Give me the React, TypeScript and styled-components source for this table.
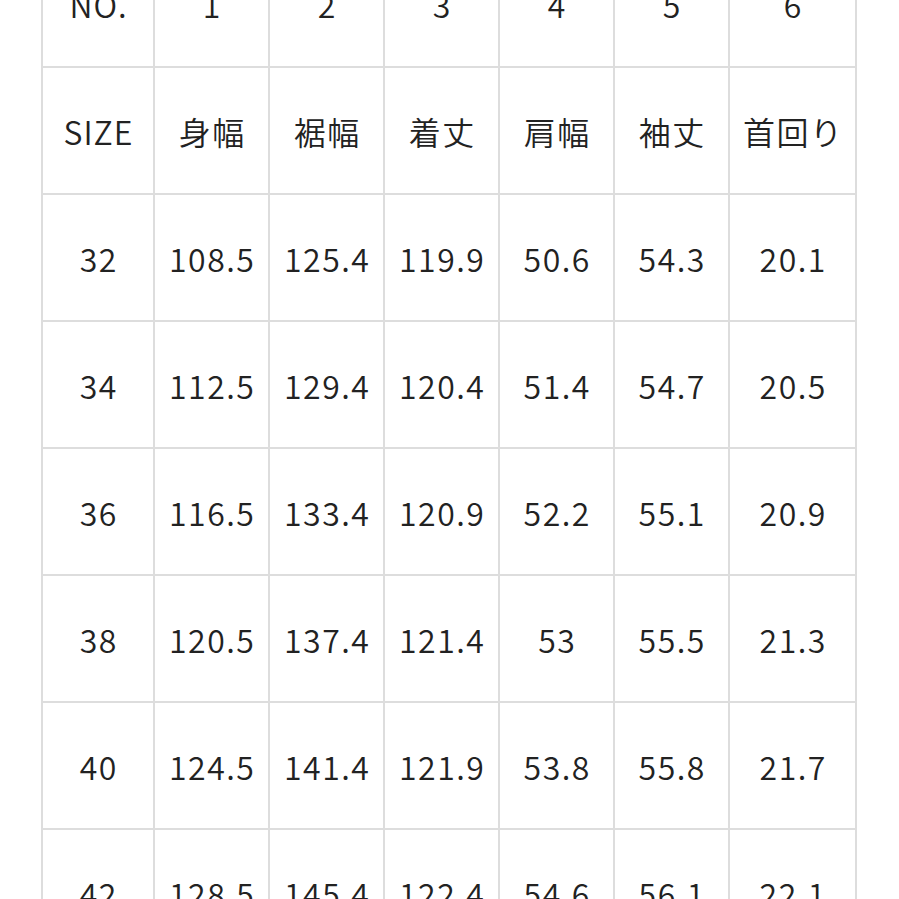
import styled, { createGlobalStyle } from "styled-components";

const GlobalStyle = createGlobalStyle`
  html, body {
    margin: 0;
    padding: 0;
    background: #ffffff;
    overflow: hidden;
  }
`

const Page = styled.div`
  width: 899px;
  height: 899px;
  overflow: hidden;
  background: #ffffff;
`

const SizeGrid = styled.div`
  display: grid;
  grid-template-columns: 110px repeat(5, 113px) 125px;
  grid-auto-rows: 125px;
  gap: 2px;
  padding: 2px;
  width: max-content;
  margin-left: 41px;
  margin-top: -61px;
  background: #dddddd;
`

const Cell = styled.div<{ $label?: boolean }>`
  display: flex;
  align-items: center;
  justify-content: center;
  background: #ffffff;
  color: #222222;
  font-family: "Noto Sans CJK JP", "Noto Sans", sans-serif;
  font-size: 32px;
  font-weight: 350;
  letter-spacing: ${props => props.$label ? '1px' : '1.5px'};
  text-indent: ${props => props.$label ? '1px' : '1.5px'};
  padding-top: 1px;
  box-sizing: border-box;
`

const header = ['NO.', '1', '2', '3', '4', '5', '6']
const labels = ['SIZE', '身幅', '裾幅', '着丈', '肩幅', '袖丈', '首回り']
const rows = [
  ['32', '108.5', '125.4', '119.9', '50.6', '54.3', '20.1'],
  ['34', '112.5', '129.4', '120.4', '51.4', '54.7', '20.5'],
  ['36', '116.5', '133.4', '120.9', '52.2', '55.1', '20.9'],
  ['38', '120.5', '137.4', '121.4', '53', '55.5', '21.3'],
  ['40', '124.5', '141.4', '121.9', '53.8', '55.8', '21.7'],
  ['42', '128.5', '145.4', '122.4', '54.6', '56.1', '22.1'],
]

export default function App() {
  return (
    <Page>
      <GlobalStyle />
      <SizeGrid>
        {header.map((h, i) => (
          <Cell key={`h${i}`} $label={i === 0}>{h}</Cell>
        ))}
        {labels.map((l, i) => (
          <Cell key={`l${i}`} $label={i === 0}>{l}</Cell>
        ))}
        {rows.map((row, r) =>
          row.map((v, c) => <Cell key={`${r}-${c}`}>{v}</Cell>)
        )}
      </SizeGrid>
    </Page>
  )
}
